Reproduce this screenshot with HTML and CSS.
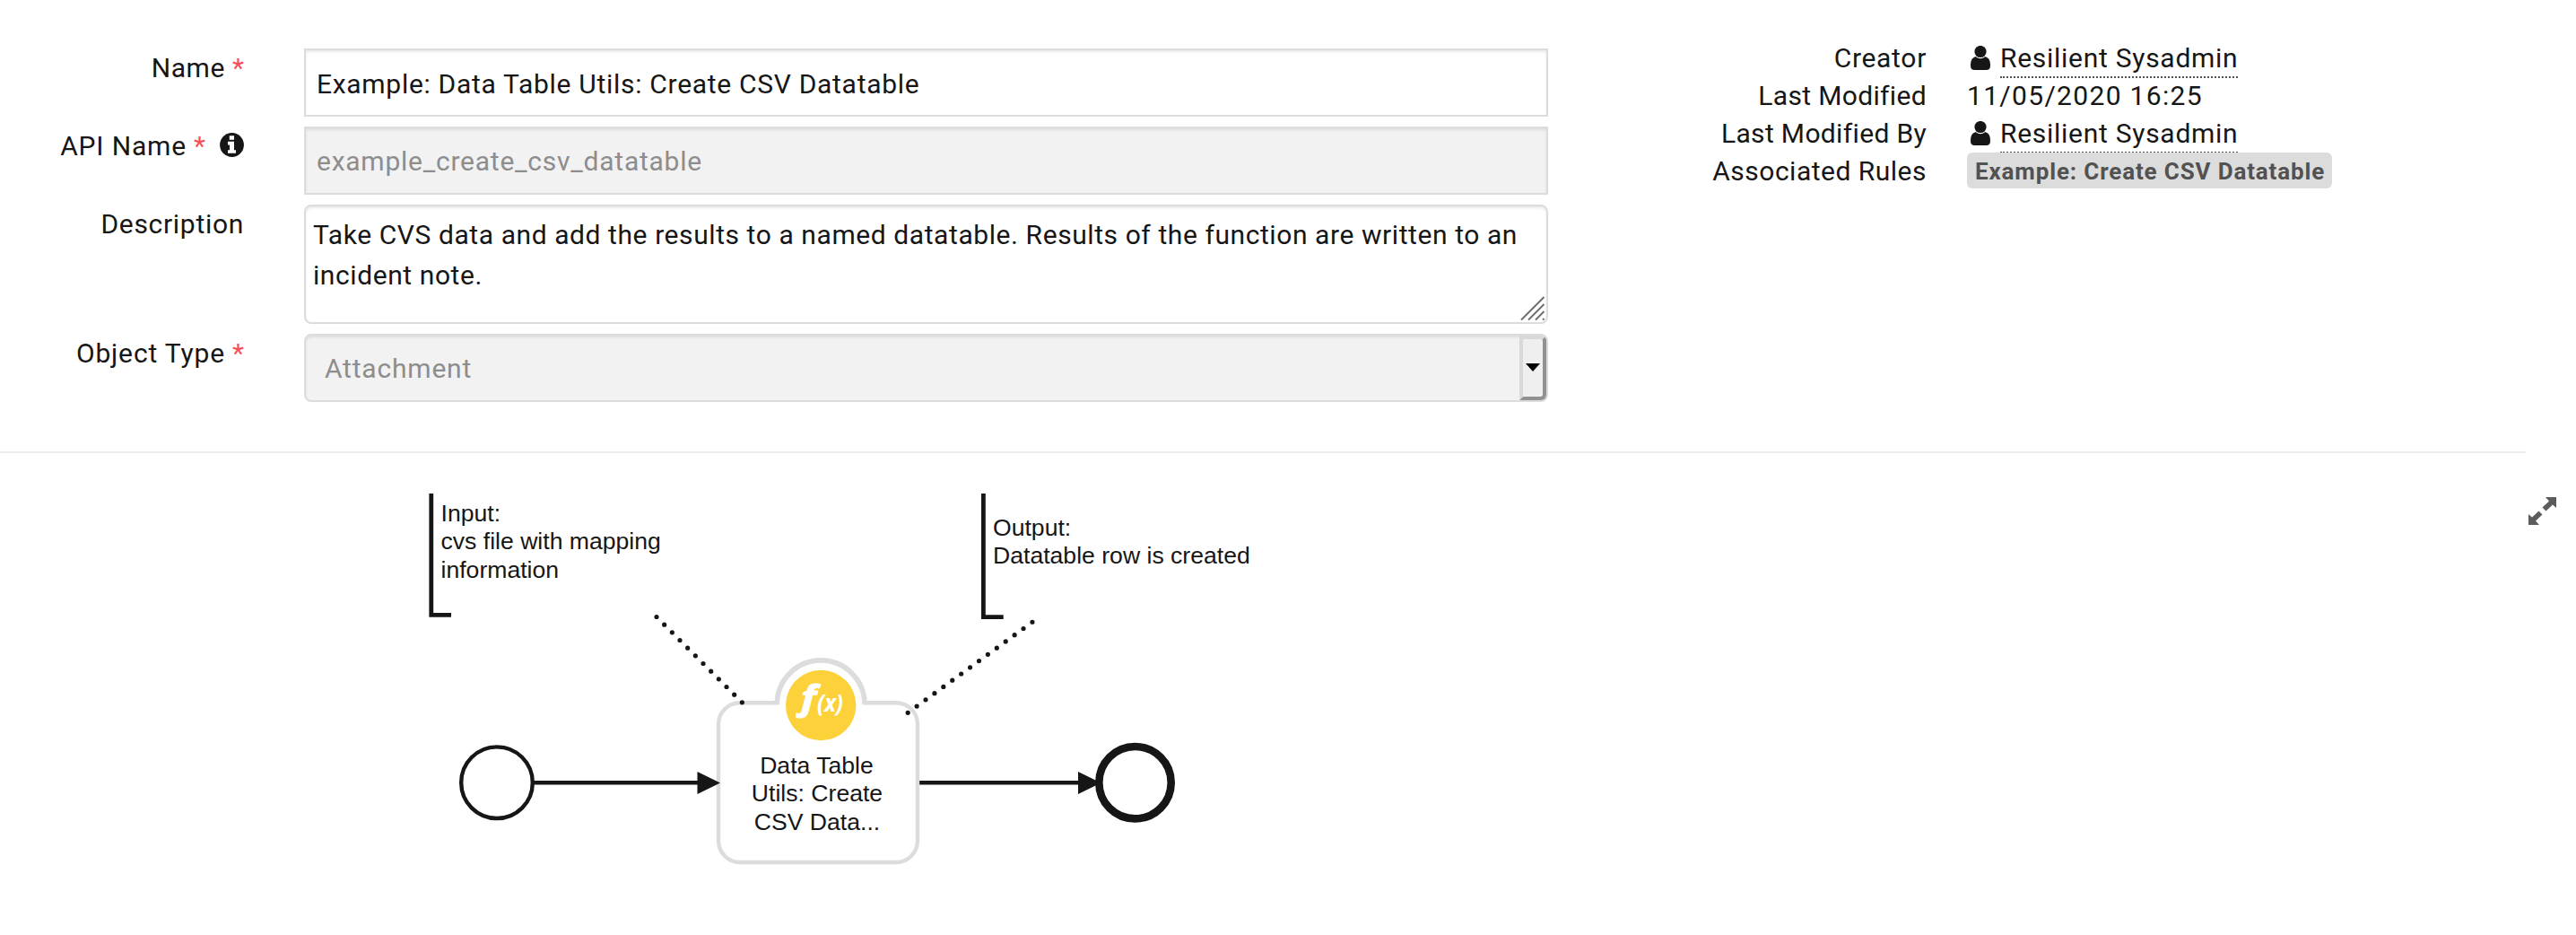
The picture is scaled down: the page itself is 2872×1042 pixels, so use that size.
FILE: index.html
```html
<!DOCTYPE html>
<html lang="en">
<head>
<meta charset="utf-8">
<title>Workflow</title>
<link rel="stylesheet" href="styles.css">
</head>
<body>
<svg class="defs" aria-hidden="true">
  <symbol id="user" viewBox="0 0 22 27">
    <path d="M6 12.3C2 12.8 0 16 0 22.200C0 25.500 1.800 27 4.500 27H17.500C20.200 27 22 25.500 22 22.200C22 16 20 12.800 16 12.300C14.600 13.500 12.900 14.200 11 14.200S7.400 13.500 6 12.300Z"/>
    <circle cx="11" cy="6.500" r="6.600"/>
  </symbol>
</svg>
<header class="top">
  <div class="form">
    <div class="label"><span class="ls">Name</span> <b class="req">*</b></div>
    <div class="field name">Example: Data Table Utils: Create CSV Datatable</div>
    <div class="label"><span class="ls wide">API Name</span> <b class="req">*</b>
      <svg class="info" viewBox="0 0 27 27"><circle cx="13.500" cy="13.500" r="13.400"/><path fill="#fff" d="M10.800 3.200h5.200v4.500h-5.200zM9 9.800h7v9.400h2v3.600H9v-3.600h2v-5.800H9z"/></svg>
    </div>
    <div class="field api">example_create_csv_datatable</div>
    <div class="label desc-label">Description</div>
    <div class="field area">Take CVS data and add the results to a named datatable. Results of the function are written to an incident note.
      <svg class="grip" viewBox="0 0 28 28"><path d="M1 26.500L26.500 1M9 26.500L26.500 9M17 26.500L26.500 17M25 26.500L26.500 25"/></svg>
    </div>
    <div class="label"><span class="ls wide">Object Type</span> <b class="req">*</b></div>
    <div class="field select"><span>Attachment</span><i class="drop"><svg viewBox="0 0 16 9"><path d="M0 0H16L8 9Z"/></svg></i></div>
  </div>
  <dl class="meta">
    <dt class="creator">Creator</dt><dd><svg class="user"><use href="#user"/></svg><a class="person">Resilient Sysadmin</a></dd>
    <dt>Last Modified</dt><dd class="date">11/05/2020 16:25</dd>
    <dt>Last Modified By</dt><dd><svg class="user"><use href="#user"/></svg><a class="person">Resilient Sysadmin</a></dd>
    <dt class="rules">Associated Rules</dt><dd><span class="badge">Example: Create CSV Datatable</span></dd>
  </dl>
</header>
<main class="canvas">
  <svg class="diagram" viewBox="0 505 2872 537">
    <g class="line">
      <path d="M480.800 550V685.400H503M1096.400 550V687.700H1118.700" stroke-width="4.800"/>
      <circle cx="554" cy="872.200" r="39.800" stroke-width="4.400"/>
      <path d="M595 872.200H780M1023 872.200H1205" stroke-width="4.400"/>
    </g>
    <path class="task" d="M866.300 783.200H825A24 24 0 0 0 801 807.200V937A24 24 0 0 0 825 961H999A24 24 0 0 0 1023 937V807.200A24 24 0 0 0 999 783.200H964"/>
    <path class="arc" d="M866.300 785.300V784.800A48.850 49 0 0 1 964 784.800V785.300"/>
    <circle cx="1265.500" cy="872.200" r="40.200" fill="#fff" stroke="#161616" stroke-width="8.600"/>
    <path d="M777.500 860V885L803 872.400ZM1202 860V885L1227.500 872.400Z" fill="#161616"/>
    <path class="dots" d="M732 687.500L827.700 783.200M1012.200 794.300L1152 692.500"/>
    <circle cx="915.200" cy="786" r="39.200" fill="#fdd13a"/>
    <text class="fx heavy" x="893" y="791" font-size="37" textLength="17" lengthAdjust="spacingAndGlyphs">f</text>
    <text class="fx" x="911" y="792.500" font-size="27" textLength="29" lengthAdjust="spacingAndGlyphs">(x)</text>
    <g class="text">
      <text x="491.500" y="581">Input:</text>
      <text x="491.500" y="612">cvs file with mapping</text>
      <text x="491.500" y="643.700">information</text>
      <text x="1107" y="597">Output:</text>
      <text x="1107" y="628">Datatable row is created</text>
    </g>
    <g class="text mid">
      <text x="910.500" y="861.700">Data Table</text>
      <text x="911" y="892.700">Utils: Create</text>
      <text x="911" y="924.500">CSV Data...</text>
    </g>
    <g transform="translate(2819 554)" fill="#5c5c5c">
      <path d="M19 0H31V12L27 8.500L19.500 15.500L15.500 11.500L23 4.500ZM12 31H0V19L4 22.500L11.500 15.500L15.500 19.500L8 26.500Z"/>
    </g>
  </svg>
</main>
</body>
</html>
```
FILE: styles.css
```css
* { box-sizing: border-box; }
body {
  margin: 0;
  height: 1042px;
  overflow: hidden;
  background: #fff;
  color: #161616;
  font: 30px/44px Roboto, sans-serif;
  letter-spacing: 0.6px;
}
.defs { position: absolute; width: 0; height: 0; }
.top {
  display: flex;
  width: 2816px;
  height: 505px;
  border-bottom: 2px solid #ededed;
}
.form {
  display: grid;
  grid-template-columns: 272px 1387px;
  grid-template-rows: 76px 76px 133px 76px;
  column-gap: 67px;
  row-gap: 11px;
  margin-top: 54px;
  height: 394px;
}
.label {
  display: flex;
  justify-content: flex-end;
  white-space: nowrap;
}
.label .ls { margin-right: 8px; letter-spacing: 0.6px; }
.label .wide { letter-spacing: 0.85px; }
.desc-label { letter-spacing: 0.7px; }
.req { color: #fa4d56; font-weight: 400; letter-spacing: 0; width: 13px; }
.info { width: 27px; height: 27px; margin: 7px 0 0 16px; fill: #161616; }
.field {
  position: relative;
  border: 2px solid #dcdcdc;
  box-shadow: inset 0 2px 3px rgba(0, 0, 0, 0.09);
  white-space: nowrap;
}
.name { padding: 2px 0 0 12px; line-height: 72px; letter-spacing: 0.7px; }
.api { padding: 1px 0 0 12px; line-height: 72px; background: #f2f2f2; color: #8d8d8d; letter-spacing: 0.75px; }
.area {
  padding: 9px 20px 0 8px;
  border-radius: 8px;
  line-height: 45px;
  letter-spacing: 0.58px;
  white-space: normal;
}
.grip {
  position: absolute;
  right: 1px;
  bottom: 1px;
  width: 28px;
  height: 28px;
  fill: none;
  stroke: #6f6f6f;
  stroke-width: 2;
}
.select {
  display: flex;
  justify-content: space-between;
  padding-left: 21px;
  line-height: 74px;
  border-radius: 8px;
  background: #f2f2f2;
  color: #8d8d8d;
  letter-spacing: 0.8px;
}
.drop {
  display: flex;
  align-items: center;
  justify-content: center;
  width: 30px;
  height: 72px;
  background: #efefef;
  border: 4px solid;
  border-color: #d9d9d9 #919191 #919191 #d9d9d9;
  border-radius: 0 6px 6px 0;
}
.drop svg { width: 16px; height: 9px; flex: none; margin-bottom: 2px; fill: #000; }
.meta {
  display: grid;
  grid-template-columns: 422px auto;
  grid-auto-rows: 42.3px;
  column-gap: 45px;
  margin: 43.500px 0 0;
  height: 170px;
  line-height: 42.3px;
  white-space: nowrap;
}
dt { text-align: right; letter-spacing: 0.34px; }
.creator { letter-spacing: 0.7px; }
.rules { letter-spacing: 0.5px; }
dd { margin: 0; display: flex; align-items: flex-start; }
.date { letter-spacing: 1.32px; }
.user { width: 22px; height: 27px; margin: 7px 11px 0 4px; fill: #161616; }
.person { height: 43px; border-bottom: 2px dotted #525252; letter-spacing: 0.72px; }
.badge {
  height: 40px;
  padding: 1px 8px 0 9px;
  border-radius: 6px;
  background: #dcdcdc;
  color: #525252;
  font-weight: 700;
  font-size: 26px;
  line-height: 40px;
  letter-spacing: 0.85px;
}
.canvas { height: 537px; }
.diagram { display: block; width: 2872px; height: 537px; }
.line { fill: none; stroke: #161616; }
.task { fill: #fff; stroke: #dcdcdc; stroke-width: 4.400; }
.arc { fill: #fff; stroke: #dcdcdc; stroke-width: 5.600; }
.dots { fill: none; stroke: #161616; stroke-width: 5.200; stroke-linecap: round; stroke-dasharray: 0 12.260; }
.text { font: 26.600px "Liberation Sans", Arial, sans-serif; letter-spacing: 0; fill: #161616; }
.mid { text-anchor: middle; }
.fx { font-family: "Open Sans", sans-serif; font-weight: 700; font-style: italic; letter-spacing: 0; fill: #fff; }
.heavy { stroke: #fff; stroke-width: 1; }
```
